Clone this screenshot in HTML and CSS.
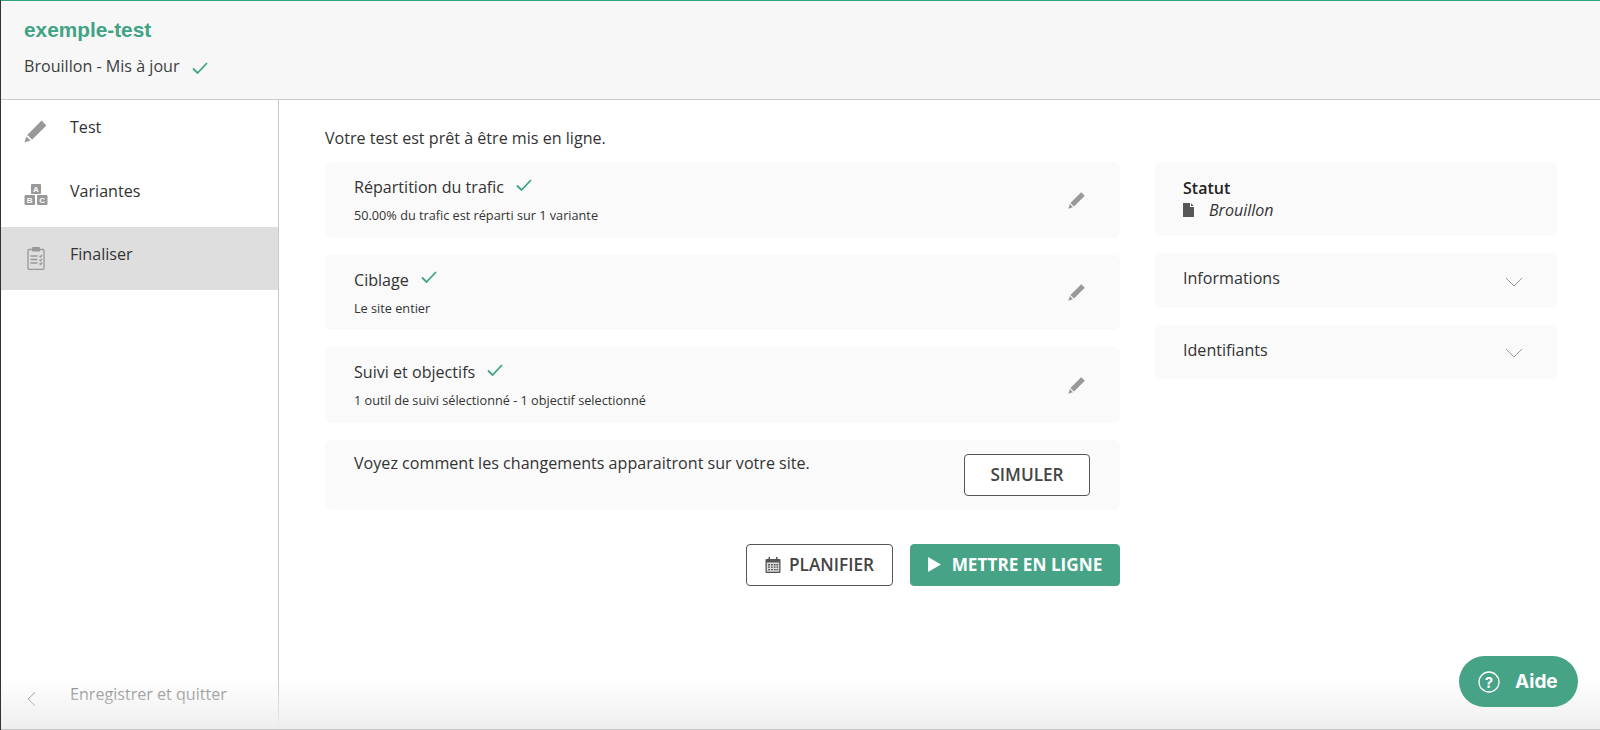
FILE: index.html
```html
<!DOCTYPE html>
<html lang="fr">
<head>
<meta charset="utf-8">
<title>exemple-test</title>
<link rel="stylesheet" href="styles.css">
</head>
<body>
<div class="app">
  <header class="top">
    <h1 class="name">exemple-test</h1>
    <div class="state"><span>Brouillon - Mis à jour</span>
      <svg class="check" viewBox="0 0 16 12"><path d="M1 6.500 5.500 11 15 1"/></svg>
    </div>
  </header>
  <div class="body">
    <nav class="side">
      <a class="nav first">
        <svg class="nico pen" viewBox="0 0 24 24"><path class="gf" d="M17.600 1.600 22.400 6.400 8 20.800 3.200 16Z"/><path class="gf" d="M2.400 17.400 6.600 21.600 0.400 23.600Z"/><path class="wl" d="M4.200 17.200 7 20"/></svg>
        <span>Test</span>
      </a>
      <a class="nav second">
        <svg class="nico blocks" viewBox="0 0 24 21"><rect class="gf" x="7" y="0" width="10" height="10" rx="1"/><rect class="gf" x="0.500" y="11" width="10.500" height="10" rx="1"/><rect class="gf" x="13" y="11" width="10.500" height="10" rx="1"/><text x="12" y="8.200" class="bl">A</text><text x="5.700" y="19.200" class="bl">B</text><text x="18.200" y="19.200" class="bl">C</text></svg>
        <span>Variantes</span>
      </a>
      <a class="nav active">
        <svg class="nico clip" viewBox="0 0 18 23"><rect class="cl" x="1" y="2.500" width="16" height="19.800" rx="1"/><rect class="gf" x="5" y="0" width="8" height="4.500" rx="1"/><path class="cl" d="M3.500 9h7M3.500 12.500h7M3.500 16h7M12.500 9l1 1 1.500-2M12.500 12.800l1 1 1.500-2M12.500 16.500l1 1 1.500-2"/></svg>
        <span>Finaliser</span>
      </a>
      <a class="quit">
        <svg class="back" viewBox="0 0 9 14"><path d="M8 0.500 1 7l7 6.500"/></svg>
        <span>Enregistrer et quitter</span>
      </a>
    </nav>
    <main class="main">
      <p class="intro">Votre test est prêt à être mis en ligne.</p>
      <div class="cols">
        <section class="left">
          <article class="card">
            <div>
              <div class="ct"><span>Répartition du trafic</span><svg class="check sm" viewBox="0 0 16 12"><path d="M1 6.500 5.500 11 15 1"/></svg></div>
              <div class="cs">50.00% du trafic est réparti sur 1 variante</div>
            </div>
            <svg class="edit" viewBox="0 0 24 24"><path d="M17.600 1.600 22.400 6.400 8 20.800 3.200 16Z"/><path d="M2.400 17.400 6.600 21.600 0.400 23.600Z"/></svg>
          </article>
          <article class="card">
            <div>
              <div class="ct"><span>Ciblage</span><svg class="check sm" viewBox="0 0 16 12"><path d="M1 6.500 5.500 11 15 1"/></svg></div>
              <div class="cs">Le site entier</div>
            </div>
            <svg class="edit" viewBox="0 0 24 24"><path d="M17.600 1.600 22.400 6.400 8 20.800 3.200 16Z"/><path d="M2.400 17.400 6.600 21.600 0.400 23.600Z"/></svg>
          </article>
          <article class="card">
            <div>
              <div class="ct"><span>Suivi et objectifs</span><svg class="check sm" viewBox="0 0 16 12"><path d="M1 6.500 5.500 11 15 1"/></svg></div>
              <div class="cs">1 outil de suivi sélectionné - 1 objectif selectionné</div>
            </div>
            <svg class="edit" viewBox="0 0 24 24"><path d="M17.600 1.600 22.400 6.400 8 20.800 3.200 16Z"/><path d="M2.400 17.400 6.600 21.600 0.400 23.600Z"/></svg>
          </article>
          <article class="card sim">
            <div class="simt">Voyez comment les changements apparaitront sur votre site.</div>
            <button class="btn simb">SIMULER</button>
          </article>
          <div class="actions">
            <button class="btn plan">
              <svg class="cal" viewBox="0 0 16 16"><rect class="cbg" x="0.500" y="2" width="15" height="14" rx="1"/><rect class="cw" x="1.800" y="5.500" width="12.400" height="9.200"/><path class="cg" d="M3 7h2v1.400H3zM6 7h1.800v1.400H6zM8.800 7h1.800v1.400H8.800zM11.400 7h1.800v1.400h-1.800zM3 9.400h2v1.400H3zM6 9.400h1.800v1.400H6zM8.800 9.400h1.800v1.400H8.800zM11.400 9.400h1.800v1.400h-1.800zM3 11.900h2v1.400H3zM6 11.900h1.800v1.400H6zM8.800 11.900h1.800v1.400H8.800zM11.400 11.900h1.800v1.400h-1.800zM3.500 0h1.500v3.500H3.500zM11 0h1.500v3.500H11z"/></svg>
              PLANIFIER
            </button>
            <button class="btn live">
              <svg class="play" viewBox="0 0 12 14"><path d="M0 0 12 7 0 14Z"/></svg>
              METTRE EN LIGNE
            </button>
          </div>
        </section>
        <aside class="right">
          <div class="card rc status">
            <div class="st">Statut</div>
            <div class="sv">
              <svg class="file" viewBox="0 0 11 14"><path d="M0 0h7v4h4v10H0Z"/><path d="M8 0.300 10.700 3H8Z"/></svg>
              <em>Brouillon</em>
            </div>
          </div>
          <div class="card rc acc"><span>Informations</span><svg class="chev" viewBox="0 0 18 10"><path d="M1 1 9 9l8-8"/></svg></div>
          <div class="card rc acc"><span>Identifiants</span><svg class="chev" viewBox="0 0 18 10"><path d="M1 1 9 9l8-8"/></svg></div>
        </aside>
      </div>
    </main>
  </div>
  <div class="fade"></div>
  <button class="help">
    <svg class="q" viewBox="0 0 22 22"><circle cx="11" cy="11" r="10"/><text x="11" y="16.500">?</text></svg>
    <span>Aide</span>
  </button>
</div>
</body>
</html>
```
FILE: styles.css
```css
* { box-sizing: border-box; }
html, body { margin: 0; height: 100%; overflow: hidden; }
body { font-family: "Open Sans", sans-serif; color: #333; background: #fff; }
.app { position: relative; width: 1600px; height: 730px; display: flex; flex-direction: column; border-left: 1px solid #333; }
.top { height: 100px; flex: none; background: #f7f7f7; border-top: 1px solid #2fa37f; border-bottom: 1px solid #ccc; padding: 18px 0 0 23px; }
.name { margin: 0; font: bold 20.800px/22px "Liberation Sans", Arial, sans-serif; color: #3fa384; }
.state { display: flex; align-items: center; margin-top: 14px; font-size: 16.100px; line-height: 22px; color: #3d3d3d; }
.check { width: 16px; height: 12px; margin-left: 12px; margin-top: 3px; }
.check path { fill: none; stroke: #3fa384; stroke-width: 1.800; }
.check.sm { margin: -5px 0 0 12px; flex: none; }
.body { flex: 1; display: flex; min-height: 0; }
.side { width: 278px; flex: none; border-right: 1px solid #c9c9c9; display: flex; flex-direction: column; }
.nav { height: 63px; display: flex; align-items: flex-start; padding: 16px 0 0 23px; font-size: 16.100px; line-height: 22px; color: #333; }
.first { height: 66px; }
.second { height: 61px; padding-top: 14px; }
.active { background: #dedede; }
.nav span { margin-left: 22px; }
.nico { width: 24px; height: 24px; flex: none; margin-top: 3px; }
.blocks { height: 21px; margin-top: 4px; }
.clip { height: 23px; margin-top: 4px; }
.gf { fill: #999; }
.wl { stroke: #fff; stroke-width: 1; fill: none; }
.cl { fill: none; stroke: #999; stroke-width: 1.300; }
.bl { font: bold 8px "Liberation Sans", sans-serif; fill: #fff; text-anchor: middle; }
.quit { margin-top: auto; display: flex; align-items: flex-start; padding: 0 0 24px 26px; font-size: 16.100px; line-height: 22px; color: #7f7f7f; }
.back { width: 9px; height: 14px; margin-top: 9px; margin-right: 34px; }
.back path { fill: none; stroke: #777; stroke-width: 1; }
.main { flex: 1; padding: 27px 43px 0 46px; min-width: 0; }
.intro { margin: 0 0 13px; font-size: 16.100px; line-height: 22px; color: #333; }
.cols { display: grid; grid-template-columns: 795px 402px; column-gap: 35px; align-items: start; }
.left, .right { display: flex; flex-direction: column; gap: 17px; }
.card { background: #fafafa; border-radius: 6px; display: flex; justify-content: space-between; align-items: flex-start; height: 75.500px; padding: 14px 34px 0 29px; }
.ct { display: flex; align-items: center; font-size: 16.100px; line-height: 22px; color: #333; }
.cs { font-size: 12.700px; line-height: 16px; margin-top: 9px; color: #333; }
.edit { width: 18px; height: 18px; align-self: center; margin-top: -14px; }
.edit path { fill: #999; }
.sim { height: 70px; padding: 12px 30px 0 29px; }
.simt { font-size: 16.100px; line-height: 22px; color: #333; }
.btn { font-family: "Open Sans", sans-serif; font-weight: 600; font-size: 17.200px; height: 42px; border-radius: 4px; border: 1px solid #555; background: #fff; color: #444; display: inline-flex; align-items: center; justify-content: center; padding: 0; }
.simb { width: 126px; margin-top: 2px; }
.actions { display: flex; justify-content: flex-end; gap: 17px; margin-top: 17px; }
.plan { width: 147px; gap: 8px; }
.live { width: 210px; gap: 11px; background: #47a386; border-color: #47a386; color: #fff; font-weight: 700; }
.cal { width: 16px; height: 16px; }
.cbg { fill: #555; }
.cw { fill: #ddd; }
.cg { fill: #555; }
.play { width: 13px; height: 15px; }
.play path { fill: #fff; }
.rc { padding: 0 34px 0 28px; }
.status { height: 74px; display: block; padding-top: 15.500px; }
.st { font-size: 16px; font-weight: 600; line-height: 20px; color: #222; }
.sv { display: flex; align-items: center; line-height: 22px; font-size: 16px; color: #333; margin-top: 1px; }
.file { width: 11px; height: 14px; margin-right: 15px; }
.file path { fill: #555; }
.acc { height: 54.500px; font-size: 16.100px; color: #333; padding-top: 14px; line-height: 22px; }
.chev { width: 18px; height: 10px; margin-top: 9.500px; }
.chev path { fill: none; stroke: #999; stroke-width: 1; }
.fade { position: absolute; left: 0; right: 0; bottom: 0; height: 52px; background: linear-gradient(rgba(240,240,240,0), rgba(238,238,238,1)); border-bottom: 1px solid #c4c4c4; pointer-events: none; }
.help { position: absolute; left: 1458px; top: 656px; width: 119px; height: 51px; border: 0; border-radius: 26px; background: #47a386; color: #fff; display: flex; align-items: center; padding: 0 0 0 19px; font: 700 19px "Inter", sans-serif; }
.q { width: 22px; height: 22px; margin-right: 15px; }
.q circle { fill: none; stroke: #fff; stroke-width: 1.300; }
.q text { fill: #fff; font: 700 15px "Inter", sans-serif; text-anchor: middle; }
```
